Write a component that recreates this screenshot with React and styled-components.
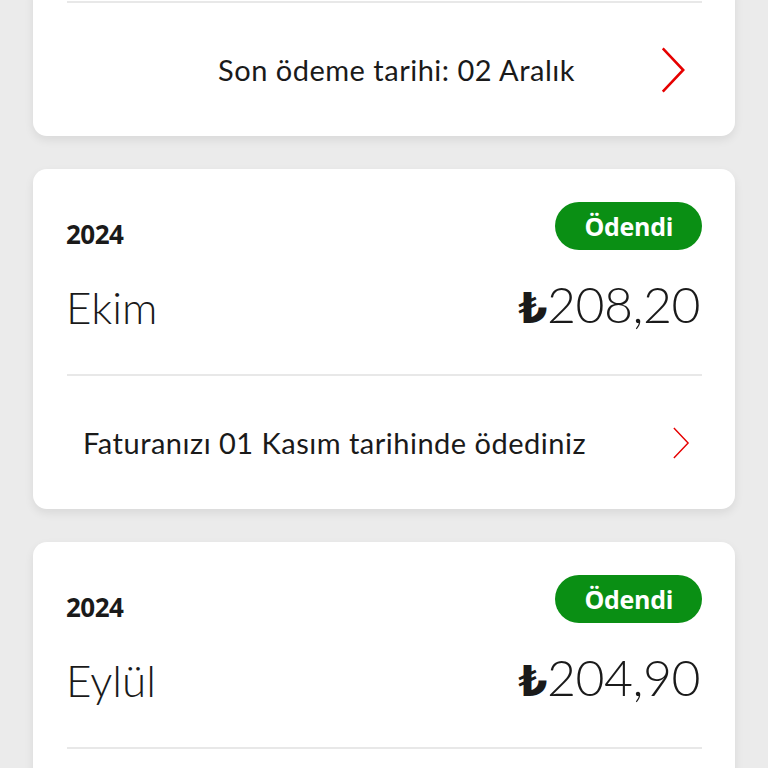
import styled, { createGlobalStyle } from 'styled-components';

const GlobalStyle = createGlobalStyle`
	html, body {
		margin: 0;
		padding: 0;
		background: #ebebeb;
		font-family: Lato, "Open Sans", sans-serif;
		color: #1a1a1a;
		overflow: hidden;
	}
`;

const bills = [
	{ year: '2024', month: 'Ekim', amount: '208,20', note: 'Faturanızı 01 Kasım tarihinde ödediniz' },
	{ year: '2024', month: 'Eylül', amount: '204,90', note: 'Faturanızı 01 Ekim tarihinde ödediniz' },
];

const Chevron = ({ large }) => (
	<ChevronIcon large={large} viewBox="0 0 20 36" fill="none">
		<path d="M2 1 L18 18 L2 35" stroke="#e60000" strokeWidth={large ? 2 : 1.6} strokeLinejoin="miter" />
	</ChevronIcon>
);

const App = () => {
	return (
		<>
			<GlobalStyle />
			<Page>
				<List>
					<Card first>
						<Divider />
						<Footer>
							<FooterText centered>Son ödeme tarihi: 02 Aralık</FooterText>
							<Chevron large />
						</Footer>
					</Card>
					{bills.map((bill) => (
						<Card key={bill.month}>
							<Header>
								<TopRow>
									<Year>{bill.year}</Year>
									<Badge>Ödendi</Badge>
								</TopRow>
								<MainRow>
									<Month>{bill.month}</Month>
									<Amount>
										<Lira>₺</Lira>
										{bill.amount}
									</Amount>
								</MainRow>
							</Header>
							<Divider />
							<Footer>
								<FooterText>{bill.note}</FooterText>
								<Chevron />
							</Footer>
						</Card>
					))}
				</List>
			</Page>
		</>
	);
};

const Page = styled.div`
	padding: 0 33px;
	height: 768px;
	overflow: hidden;
`;

const List = styled.div`
	display: flex;
	flex-direction: column;
	gap: 33px;
	margin-top: -20px;
`;

const Card = styled.div`
	background: #fff;
	border-radius: 14px;
	box-shadow: 0 4px 10px rgba(0, 0, 0, 0.08);
	padding-top: ${(p) => (p.first ? '21px' : '0')};
`;

const Header = styled.div`
	padding: 33px 33px 0;
	height: 205px;
	box-sizing: border-box;
`;

const TopRow = styled.div`
	display: flex;
	justify-content: space-between;
	align-items: flex-end;
`;

const Year = styled.div`
	font-family: "Open Sans", sans-serif;
	font-weight: 700;
	font-size: 26px;
	line-height: 1;
	padding-bottom: 3px;
	letter-spacing: -0.5px;
`;

const Badge = styled.div`
	background: #0a8f14;
	color: #fff;
	font-family: "Open Sans", sans-serif;
	font-weight: 700;
	font-size: 25px;
	height: 48px;
	line-height: 48px;
	padding: 0 29px;
	border-radius: 24px;
	letter-spacing: -0.3px;
`;

const MainRow = styled.div`
	display: flex;
	justify-content: space-between;
	align-items: center;
	margin-top: 24px;
	padding-right: 2px;
`;

const Month = styled.div`
	font-weight: 300;
	font-size: 44px;
	line-height: 60px;
`;

const Amount = styled.div`
	font-weight: 300;
	font-size: 50px;
	line-height: 60px;
	letter-spacing: -0.5px;
`;

const Lira = styled.span`
	font-family: "DejaVu Sans", sans-serif;
	font-weight: 700;
	font-size: 42px;
`;

const Divider = styled.div`
	height: 2px;
	background: #e8e8e8;
	margin: 0 33px 0 34px;
`;

const Footer = styled.div`
	display: flex;
	align-items: center;
	height: 133px;
	padding: 0 45px 0 50px;
`;

const FooterText = styled.div`
	flex: 1;
	font-size: 29px;
	font-weight: 400;
	letter-spacing: 0.5px;
	text-align: ${(p) => (p.centered ? 'center' : 'left')};
	padding-left: ${(p) => (p.centered ? '50px' : '0')};
`;

const ChevronIcon = styled.svg`
	width: ${(p) => (p.large ? '26px' : '18px')};
	height: ${(p) => (p.large ? '46px' : '32px')};
	margin-right: ${(p) => (p.large ? '4px' : '0')};
	flex-shrink: 0;
`;

export default App;
